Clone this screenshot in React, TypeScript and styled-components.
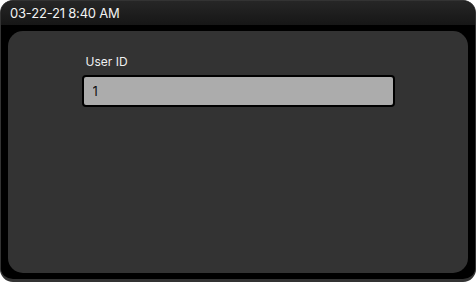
import styled, { createGlobalStyle } from "styled-components";

const GlobalStyle = createGlobalStyle`
  html, body {
    margin: 0;
    padding: 0;
    background: #ffffff;
  }
  body {
    font-family: Inter, "Noto Sans", "Liberation Sans", sans-serif;
  }
`;

const Frame = styled.div`
  box-sizing: border-box;
  width: 476px;
  height: 282px;
  display: flex;
  flex-direction: column;
  background: #000;
  border: 1px solid #333;
  border-bottom-width: 3px;
  border-radius: 13px;
  overflow: hidden;
`;

const StatusBar = styled.div`
  height: 24px;
  flex: none;
  display: flex;
  align-items: center;
  padding-left: 9px;
  background: linear-gradient(#262626, #161616);
  color: #f2f2f2;
  font-size: 13px;
  letter-spacing: -0.2px;
`;

const Body = styled.div`
  flex: 1;
  display: flex;
  padding: 6px 7px 6px 7px;
`;

const Panel = styled.div`
  flex: 1;
  background: #333333;
  border-radius: 15px;
  padding-top: 23px;
`;

const Field = styled.div`
  width: 313px;
  margin: 0 auto;
  display: flex;
  flex-direction: column;
`;

const Label = styled.label`
  color: #f0f0f0;
  font-size: 12px;
  line-height: 16px;
  margin-left: 4px;
  margin-bottom: 5px;
`;

const Input = styled.input`
  box-sizing: border-box;
  height: 32px;
  width: 100%;
  background: #acacac;
  border: 2px solid #000;
  border-radius: 4px;
  padding: 0 9px;
  color: #111;
  font-family: inherit;
  font-size: 13px;
  outline: none;
`;

export default function App() {
  return (
    <>
      <GlobalStyle />
      <Frame>
        <StatusBar>03-22-21 8:40 AM</StatusBar>
        <Body>
          <Panel>
            <Field>
              <Label htmlFor="user-id">User ID</Label>
              <Input id="user-id" defaultValue="1" />
            </Field>
          </Panel>
        </Body>
      </Frame>
    </>
  );
}
